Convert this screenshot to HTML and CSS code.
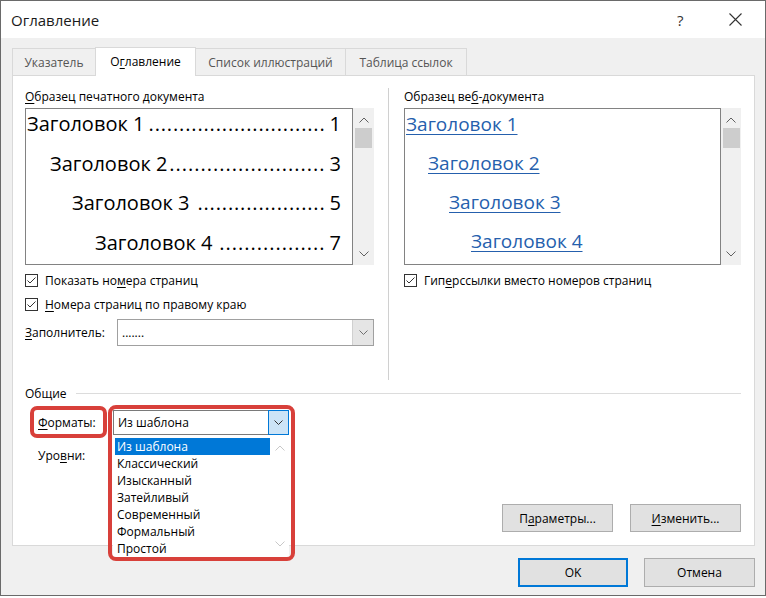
FILE: index.html
```html
<!DOCTYPE html>
<html lang="ru">
<head>
<meta charset="utf-8">
<title>Оглавление</title>
<link rel="stylesheet" href="styles.css">
</head>
<body>
<div class="window">
  <div class="titlebar">
    <span class="title">Оглавление</span>
    <span class="tb-help">?</span>
    <span class="tb-close"><svg width="13" height="13" viewBox="0 0 13 13"><path d="M0.5 0.5 L12.5 12.5 M12.5 0.5 L0.5 12.5" stroke="#333" stroke-width="1.1" fill="none"/></svg></span>
  </div>
  <div class="body">
    <div class="tabs">
      <div class="tab t1">Указатель</div>
      <div class="tab t2 active">О<u>г</u>лавление</div>
      <div class="tab t3">Список иллюстраций</div>
      <div class="tab t4">Таблица ссылок</div>
    </div>
    <div class="panel">
      <div class="top">
        <div class="col col-left">
          <div class="label"><u>О</u>бразец печатного документа</div>
          <div class="preview">
            <div class="pv-box pv-print">
              <div class="toc-line i1"><span class="h">Заголовок 1</span><span class="dots">.............................</span><span class="num">1</span></div>
              <div class="toc-line i2"><span class="h">Заголовок 2</span><span class="dots">.........................</span><span class="num">3</span></div>
              <div class="toc-line i3"><span class="h">Заголовок 3</span><span class="dots">.....................</span><span class="num">5</span></div>
              <div class="toc-line i4"><span class="h">Заголовок 4</span><span class="dots">.................</span><span class="num">7</span></div>
            </div>
            <div class="vscroll">
              <svg class="chev" width="10" height="6" viewBox="0 0 10 6"><path d="M0.5 5.5 L5 1 L9.5 5.5" stroke="#606060" fill="none"/></svg>
              <div class="thumb"></div>
              <div class="spacer"></div>
              <svg class="chev" width="10" height="6" viewBox="0 0 10 6"><path d="M0.5 0.5 L5 5 L9.5 0.5" stroke="#606060" fill="none"/></svg>
            </div>
          </div>
          <div class="check first">
            <span class="cb"><svg width="13" height="13" viewBox="0 0 13 13"><rect x="0.5" y="0.5" width="12" height="12" fill="#fff" stroke="#333"/><path d="M2.5 6.5 L5 9 L10.5 3.5" stroke="#333" fill="none"/></svg></span>
            <span>Показать но<u>м</u>ера страниц</span>
          </div>
          <div class="check">
            <span class="cb"><svg width="13" height="13" viewBox="0 0 13 13"><rect x="0.5" y="0.5" width="12" height="12" fill="#fff" stroke="#333"/><path d="M2.5 6.5 L5 9 L10.5 3.5" stroke="#333" fill="none"/></svg></span>
            <span><u>Н</u>омера страниц по правому краю</span>
          </div>
          <div class="field-row">
            <span class="field-label"><u>З</u>аполнитель:</span>
            <div class="combo combo-fill">
              <span class="combo-value">.......</span>
              <span class="combo-btn"><svg width="9" height="5" viewBox="0 0 9 5"><path d="M0.5 0.5 L4.5 4.5 L8.5 0.5" stroke="#707070" fill="none"/></svg></span>
            </div>
          </div>
        </div>
        <div class="vsep"></div>
        <div class="col col-right">
          <div class="label">Образец ве<u>б</u>-документа</div>
          <div class="preview">
            <div class="pv-box pv-web">
              <div class="web-line i1"><span class="link">Заголовок 1</span></div>
              <div class="web-line i2"><span class="link">Заголовок 2</span></div>
              <div class="web-line i3"><span class="link">Заголовок 3</span></div>
              <div class="web-line i4"><span class="link">Заголовок 4</span></div>
            </div>
            <div class="vscroll">
              <svg class="chev" width="10" height="6" viewBox="0 0 10 6"><path d="M0.5 5.5 L5 1 L9.5 5.5" stroke="#606060" fill="none"/></svg>
              <div class="thumb"></div>
              <div class="spacer"></div>
              <svg class="chev" width="10" height="6" viewBox="0 0 10 6"><path d="M0.5 0.5 L5 5 L9.5 0.5" stroke="#606060" fill="none"/></svg>
            </div>
          </div>
          <div class="check first">
            <span class="cb"><svg width="13" height="13" viewBox="0 0 13 13"><rect x="0.5" y="0.5" width="12" height="12" fill="#fff" stroke="#333"/><path d="M2.5 6.5 L5 9 L10.5 3.5" stroke="#333" fill="none"/></svg></span>
            <span>Гип<u>е</u>рссылки вместо номеров страниц</span>
          </div>
        </div>
      </div>
      <div class="group-head"><span>Общие</span><span class="group-line"></span></div>
      <div class="general">
        <div class="gen-left">
          <div class="formats-row">
            <div class="fmt-label"><u>Ф</u>орматы:</div>
            <div class="combo-wrap">
              <div class="combo combo-fmt">
                <span class="combo-value">Из шаблона</span>
                <span class="combo-btn active"><svg width="9" height="5" viewBox="0 0 9 5"><path d="M0.5 0.5 L4.5 4.5 L8.5 0.5" stroke="#333" fill="none"/></svg></span>
              </div>
              <div class="dropdown">
                <div class="items">
                  <div class="item selected">Из шаблона</div>
                  <div class="item">Классический</div>
                  <div class="item">Изысканный</div>
                  <div class="item">Затейливый</div>
                  <div class="item">Современный</div>
                  <div class="item">Формальный</div>
                  <div class="item">Простой</div>
                </div>
                <div class="dd-scroll">
                  <svg width="10" height="6" viewBox="0 0 10 6"><path d="M0.5 5.5 L5 1 L9.5 5.5" stroke="#c8c8c8" fill="none"/></svg>
                  <svg width="10" height="6" viewBox="0 0 10 6"><path d="M0.5 0.5 L5 5 L9.5 0.5" stroke="#c8c8c8" fill="none"/></svg>
                </div>
              </div>
              <div class="annot"></div>
            </div>
          </div>
          <div class="levels">Уро<u>в</u>ни:</div>
        </div>
        <div class="gen-buttons">
          <div class="btn">П<u>а</u>раметры...</div>
          <div class="btn"><u>И</u>зменить...</div>
        </div>
      </div>
    </div>
    <div class="footer">
      <div class="btn big default">OK</div>
      <div class="btn big">Отмена</div>
    </div>
  </div>
</div>
</body>
</html>
```
FILE: styles.css
```css
* { box-sizing: border-box; }
html, body { margin: 0; padding: 0; background: #ffffff; }
body {
  font-family: "Open Sans", "Noto Sans", "DejaVu Sans", sans-serif;
  font-size: 12px;
  color: #000;
}
u { text-decoration: underline; text-underline-offset: 2px; text-decoration-thickness: 1px; }

.window {
  width: 766px;
  height: 596px;
  border: 1px solid #6a6a6a;
  background: #f0f0f0;
  display: flex;
  flex-direction: column;
  overflow: hidden;
}

.titlebar {
  height: 37px;
  background: #ffffff;
  display: flex;
  align-items: center;
  padding-left: 10px;
  flex-shrink: 0;
}
.title { font-size: 15px; color: #1a1a1a; flex: 1; }
.tb-help { font-size: 15px; color: #333; width: 14px; margin-right: 38px; }
.tb-close { width: 13px; height: 13px; margin-right: 23px; display: flex; }

.body {
  flex: 1;
  display: flex;
  flex-direction: column;
  padding: 9px 10px 0 11px;
}

.tabs {
  display: flex;
  align-items: flex-end;
  height: 28px;
  position: relative;
  z-index: 2;
}
.tab {
  height: 27px;
  border: 1px solid #d9d9d9;
  border-bottom: none;
  background: #f0f0f0;
  color: #555;
  display: flex;
  align-items: center;
  justify-content: center;
  margin-left: -1px;
}
.tab.t1 { width: 84px; margin-left: 0; }
.tab.t2 { width: 101px; }
.tab.t3 { width: 151px; }
.tab.t4 { width: 122px; }
.tab.active {
  height: 29px;
  margin-bottom: -1px;
  background: #ffffff;
  color: #000;
  position: relative;
  z-index: 3;
  padding-bottom: 2px;
}

.panel {
  height: 471px;
  background: #ffffff;
  border: 1px solid #d9d9d9;
  display: flex;
  flex-direction: column;
  padding: 13px 13px 0 12px;
  position: relative;
  z-index: 1;
}

.top {
  display: flex;
  height: 291px;
}
.col { display: flex; flex-direction: column; }
.col-left { width: 349px; }
.col-right { width: 337px; }
.vsep {
  width: 1px;
  background: #d0d0d0;
  margin: -1px 15px 0 14px;
}

.label { height: 16px; line-height: 16px; color: #000; margin-bottom: 3px; }

.preview { display: flex; height: 157px; }
.pv-box {
  flex: 1;
  border: 1px solid #828282;
  background: #fff;
  display: flex;
  flex-direction: column;
  overflow: hidden;
}
.vscroll {
  width: 20px;
  background: #f0f0f0;
  display: flex;
  flex-direction: column;
  align-items: center;
  padding: 9px 0 8px;
}
.col-left .vscroll { width: 21px; }
.vscroll .thumb {
  width: 17px;
  height: 20px;
  background: #cdcdcd;
  margin-top: 5px;
}
.vscroll .spacer { flex: 1; }

.pv-print { padding: 0 11px 0 1px; gap: 9.5px; }
.toc-line {
  display: flex;
  height: 30px;
  line-height: 30px;
  font-size: 20px;
  white-space: nowrap;
}
.toc-line .h { flex-shrink: 0; }
.toc-line .dots {
  flex-shrink: 0;
  margin-left: auto;
  letter-spacing: 1px;
}
.toc-line.i1 .dots, .toc-line.i3 .dots { letter-spacing: 0.85px; }
.toc-line .num { margin-left: 4px; flex-shrink: 0; }
.toc-line.i2 { padding-left: 23px; }
.toc-line.i3 { padding-left: 45px; }
.toc-line.i4 { padding-left: 68px; }

.pv-web { padding: 1px 0 0 1px; gap: 11px; }
.web-line { height: 28px; line-height: 28px; font-size: 19px; white-space: nowrap; }
.web-line .link {
  color: #2560ad;
  text-decoration: underline;
  text-decoration-thickness: 1px;
  text-underline-offset: 3px;
}
.web-line.i2 { padding-left: 22px; }
.web-line.i3 { padding-left: 43px; }
.web-line.i4 { padding-left: 65px; }

.check {
  display: flex;
  align-items: center;
  height: 16px;
  margin-top: 8px;
}
.check.first { margin-top: 7px; }
.cb { width: 13px; height: 13px; display: flex; margin-right: 7px; }

.field-row {
  display: flex;
  align-items: center;
  margin-top: 7px;
}
.field-label { width: 92px; }

.combo {
  display: flex;
  align-items: stretch;
  border: 1px solid #a0a0a0;
  background: #fff;
}
.combo-fill { width: 257px; height: 27px; }
.combo-value { flex: 1; display: flex; align-items: center; padding-left: 4px; }
.combo-btn {
  width: 21px;
  background: #e5e5e5;
  border-left: 1px solid #d0d0d0;
  display: flex;
  align-items: center;
  justify-content: center;
}
.combo-btn.active {
  background: #cce4f7;
  border: 1px solid #0078d7;
  margin: -1px -1px -1px 0;
  width: 21px;
}

.group-head {
  display: flex;
  align-items: center;
  height: 16px;
  margin-top: 5px;
}
.group-line {
  flex: 1;
  height: 1px;
  background: #dcdcdc;
  margin-left: 9px;
}

.general {
  flex: 1;
  display: flex;
  justify-content: space-between;
  padding-bottom: 13px;
}
.gen-left { display: flex; flex-direction: column; padding-top: 5px; }

.formats-row {
  display: flex;
  align-items: center;
  margin-left: 5px;
}
.fmt-label {
  width: 77px;
  height: 32px;
  border: 4px solid #d8403a;
  border-radius: 7px;
  display: flex;
  align-items: center;
  padding-left: 4px;
}
.combo-wrap {
  position: relative;
  margin-left: 6px;
  width: 176px;
  height: 25px;
}
.combo-fmt { height: 25px; border-color: #7a7a7a; }
.combo-fmt .combo-value { padding-left: 4px; }

.dropdown {
  position: absolute;
  top: 27px;
  left: 0;
  width: 176px;
  height: 120px;
  background: #fff;
  display: flex;
  z-index: 5;
}
.items { flex: 1; padding: 1px 0 0 2px; }
.item {
  height: 17px;
  line-height: 17px;
  padding-left: 2px;
  white-space: nowrap;
}
.item.selected { background: #0078d7; color: #fff; }
.dd-scroll {
  width: 19px;
  display: flex;
  flex-direction: column;
  justify-content: space-between;
  align-items: center;
  padding: 8px 0 10px;
  background: #fff;
}
.annot {
  position: absolute;
  left: -5px;
  top: -5px;
  width: 187px;
  height: 156px;
  border: 4px solid #d8403a;
  border-radius: 8px;
  z-index: 6;
  pointer-events: none;
}

.levels {
  margin-top: 10px;
  margin-left: 13px;
  height: 16px;
  line-height: 16px;
}

.gen-buttons {
  display: flex;
  align-self: flex-end;
  gap: 17px;
}
.btn {
  width: 111px;
  height: 28px;
  background: #e1e1e1;
  border: 1px solid #adadad;
  display: flex;
  align-items: center;
  justify-content: center;
  color: #000;
}

.footer {
  display: flex;
  justify-content: flex-end;
  gap: 16px;
  margin-top: 12px;
}
.btn.big { height: 29px; }
.btn.default { border: 2px solid #0078d7; width: 110px; }
```
